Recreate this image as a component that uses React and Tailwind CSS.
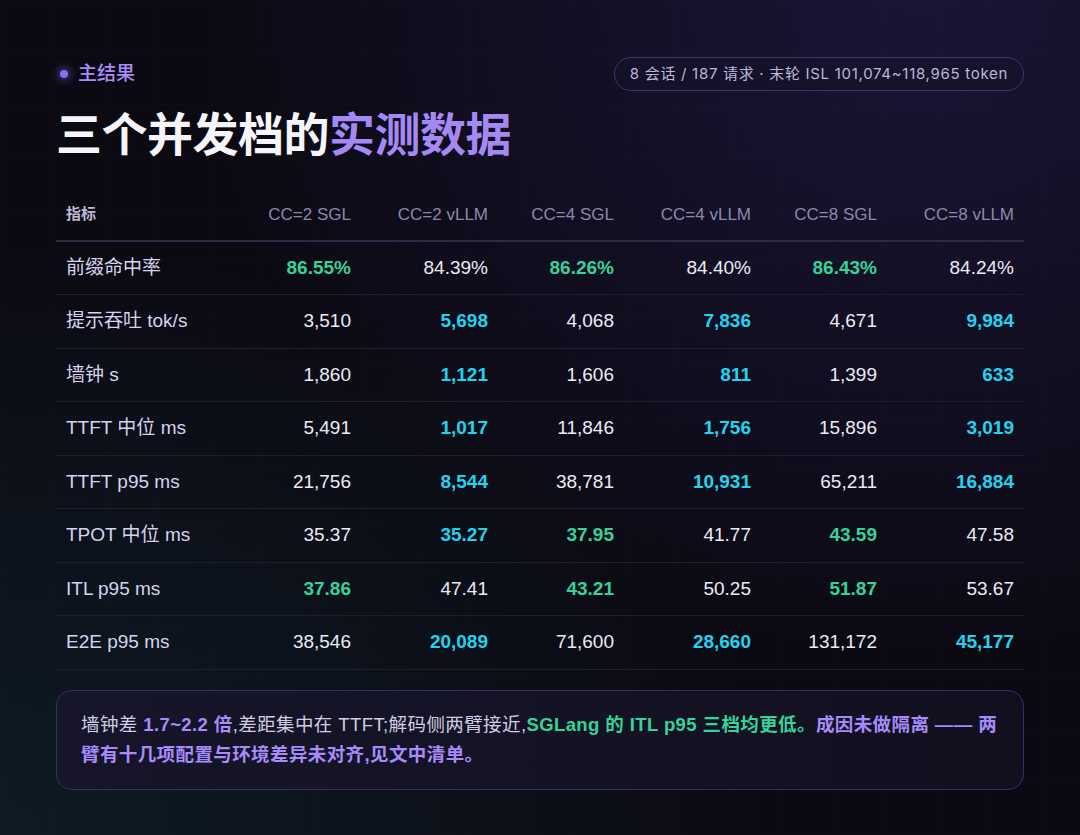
const cols = ['CC=2 SGL', 'CC=2 vLLM', 'CC=4 SGL', 'CC=4 vLLM', 'CC=8 SGL', 'CC=8 vLLM']

// g = green (best, decode side), c = cyan (best, throughput side), '' = plain
const rows = [
  ['前缀命中率', [['86.55%', 'g'], ['84.39%', ''], ['86.26%', 'g'], ['84.40%', ''], ['86.43%', 'g'], ['84.24%', '']]],
  ['提示吞吐 tok/s', [['3,510', ''], ['5,698', 'c'], ['4,068', ''], ['7,836', 'c'], ['4,671', ''], ['9,984', 'c']]],
  ['墙钟 s', [['1,860', ''], ['1,121', 'c'], ['1,606', ''], ['811', 'c'], ['1,399', ''], ['633', 'c']]],
  ['TTFT 中位 ms', [['5,491', ''], ['1,017', 'c'], ['11,846', ''], ['1,756', 'c'], ['15,896', ''], ['3,019', 'c']]],
  ['TTFT p95 ms', [['21,756', ''], ['8,544', 'c'], ['38,781', ''], ['10,931', 'c'], ['65,211', ''], ['16,884', 'c']]],
  ['TPOT 中位 ms', [['35.37', ''], ['35.27', 'c'], ['37.95', 'g'], ['41.77', ''], ['43.59', 'g'], ['47.58', '']]],
  ['ITL p95 ms', [['37.86', 'g'], ['47.41', ''], ['43.21', 'g'], ['50.25', ''], ['51.87', 'g'], ['53.67', '']]],
  ['E2E p95 ms', [['38,546', ''], ['20,089', 'c'], ['71,600', ''], ['28,660', 'c'], ['131,172', ''], ['45,177', 'c']]],
]

const tone = {
  g: 'text-[#34d399] font-semibold',
  c: 'text-[#22d3ee] font-semibold',
  '': 'text-[#ecebf5]',
}

const colW = ['w-[179px]', 'w-[126px]', 'w-[137px]', 'w-[126px]', 'w-[137px]', 'w-[126px]', 'w-[137px]']

export default function App() {
  return (
    <div className="relative w-[1080px] h-[835px] overflow-hidden bg-[#0b0a13] font-['Liberation_Sans','Noto_Sans_CJK_SC',sans-serif]">
      {/* glows + faint grid */}
      <div className="absolute inset-0 bg-[radial-gradient(ellipse_at_85%_0%,rgba(55,42,125,0.32),transparent_55%)]" />
      <div className="absolute inset-0 bg-[radial-gradient(ellipse_at_0%_100%,rgba(20,70,80,0.28),transparent_50%)]" />
      <div className="absolute inset-0 bg-[linear-gradient(rgba(255,255,255,0.012)_1px,transparent_1px),linear-gradient(90deg,rgba(255,255,255,0.012)_1px,transparent_1px)] bg-[size:52px_52px]" />

      <div className="relative px-[56px] pt-[57px]">
        {/* header */}
        <div className="flex items-start justify-between">
          <div>
            <div className="flex items-center gap-[10px] h-[34px]">
              <span className="ml-[4px] w-[8px] h-[8px] rounded-full bg-[#8b6cf6] shadow-[0_0_8px_2px_rgba(139,108,246,0.5)]" />
              <span className="text-[19px] text-[#a88cf7] font-medium">主结果</span>
            </div>
            <h1 className="mt-[16px] text-[46px] leading-[56px] font-bold tracking-[-0.5px] text-[#f6f5fb]">
              三个并发档的<span className="text-[#a488f4]">实测数据</span>
            </h1>
          </div>
          <div className="h-[34px] px-[15px] flex items-center rounded-full border border-[#3a3670] bg-[#14122a]/60 text-[15px] text-[#bcb8d8] tracking-[0.7px] font-['Inter','Noto_Sans_CJK_SC',sans-serif]">
            8 会话 / 187 请求 · 末轮 ISL 101,074~118,965 token
          </div>
        </div>

        {/* table */}
        <table className="mt-[26px] w-[968px] table-fixed border-collapse">
          <colgroup>
            {colW.map((w, i) => (
              <col key={i} className={w} />
            ))}
          </colgroup>
          <thead>
            <tr className="h-[52px] border-b-2 border-[#2c2a45]">
              <th className="pl-[10px] text-left text-[15px] font-bold text-[#bdb9d6]">指标</th>
              {cols.map((c) => (
                <th key={c} className="pr-[10px] text-right text-[17px] font-normal text-[#8c88ad]">
                  {c}
                </th>
              ))}
            </tr>
          </thead>
          <tbody>
            {rows.map(([label, vals]) => (
              <tr key={label} className="h-[53.5px] border-b border-[#1f1d30]">
                <td className="pl-[10px] text-[19px] text-[#d6d3ee] whitespace-nowrap">{label}</td>
                {vals.map(([v, t], i) => (
                  <td key={i} className={`pr-[10px] text-right text-[19px] ${tone[t]}`}>
                    {v}
                  </td>
                ))}
              </tr>
            ))}
          </tbody>
        </table>

        {/* note */}
        <div className="mt-[20px] rounded-[16px] border border-[#342e68] bg-[linear-gradient(90deg,#161529,#12101f)] px-[24px] py-[19px] text-[18.5px] leading-[30px] tracking-[0.4px] text-[#d0cde6]">
          墙钟差 <span className="text-[#a78bfa] font-semibold">1.7~2.2 倍</span>,差距集中在 TTFT;解码侧两臂接近,
          <span className="text-[#34d399] font-semibold">SGLang 的 ITL p95 三档均更低。</span>
          <span className="text-[#a78bfa] font-semibold">成因未做隔离 —— 两臂有十几项配置与环境差异未对齐,见文中清单。</span>
        </div>
      </div>
    </div>
  )
}
